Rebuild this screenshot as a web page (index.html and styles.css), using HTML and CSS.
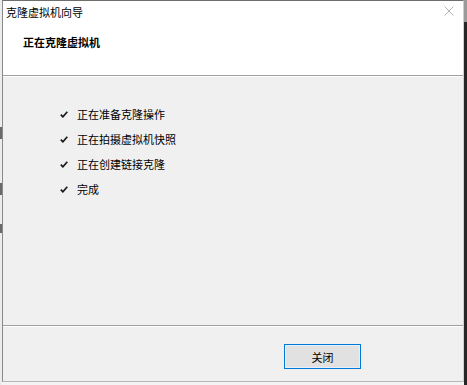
FILE: index.html
```html
<!DOCTYPE html>
<html lang="zh-CN">
<head>
<meta charset="utf-8">
<title>克隆虚拟机向导</title>
<link rel="stylesheet" href="styles.css">
</head>
<body>
<div class="screen">
  <div class="bg-left">
    <span class="mark m1"></span>
    <span class="mark m2"></span>
    <span class="mark m3"></span>
  </div>
  <div class="window">
    <div class="titlebar">
      <span class="title">克隆虚拟机向导</span>
      <svg class="close" width="10" height="10" viewBox="0 0 10 10"><path d="M0.5 0.5 L9.5 9.5 M9.5 0.5 L0.5 9.5" stroke="#b4b4b4" stroke-width="1" fill="none"/></svg>
    </div>
    <div class="header">
      <div class="heading">正在克隆虚拟机</div>
    </div>
    <div class="sep"></div>
    <div class="content">
      <ul class="steps">
        <li class="step"><svg class="check" width="8" height="7" viewBox="0 0 8 7"><path d="M0.8 3.6 L2.9 5.8 L7.3 0.8" stroke="#1a1a1a" stroke-width="1.7" fill="none"/></svg><span>正在准备克隆操作</span></li>
        <li class="step"><svg class="check" width="8" height="7" viewBox="0 0 8 7"><path d="M0.8 3.6 L2.9 5.8 L7.3 0.8" stroke="#1a1a1a" stroke-width="1.7" fill="none"/></svg><span>正在拍摄虚拟机快照</span></li>
        <li class="step"><svg class="check" width="8" height="7" viewBox="0 0 8 7"><path d="M0.8 3.6 L2.9 5.8 L7.3 0.8" stroke="#1a1a1a" stroke-width="1.7" fill="none"/></svg><span>正在创建链接克隆</span></li>
        <li class="step"><svg class="check" width="8" height="7" viewBox="0 0 8 7"><path d="M0.8 3.6 L2.9 5.8 L7.3 0.8" stroke="#1a1a1a" stroke-width="1.7" fill="none"/></svg><span>完成</span></li>
      </ul>
    </div>
    <div class="sep"></div>
    <div class="footer">
      <button class="btn" type="button">关闭</button>
    </div>
  </div>
  <div class="bg-right"></div>
</div>
</body>
</html>
```
FILE: styles.css
```css
html, body {
  margin: 0;
  padding: 0;
}
body {
  width: 467px;
  height: 385px;
  overflow: hidden;
  background: #f4f4f4;
  font-family: "Noto Sans CJK SC", "Microsoft YaHei", sans-serif;
  font-size: 11px;
  color: #000;
}
.screen {
  display: flex;
  align-items: flex-start;
  width: 467px;
  height: 385px;
}
.bg-left {
  width: 2px;
  height: 385px;
  background: #ececec;
  display: flex;
  flex-direction: column;
}
.mark {
  display: block;
  width: 2px;
  background: #6a6a6a;
}
.m1 { margin-top: 127px; height: 12px; }
.m2 { margin-top: 44px; height: 12px; }
.m3 { margin-top: 29px; height: 9px; }
.bg-right {
  width: 3px;
  height: 385px;
  background: linear-gradient(#9a9a9a 0, #9a9a9a 22px, #262626 22px, #262626 100%);
}
.window {
  width: 462px;
  height: 382px;
  box-sizing: border-box;
  border-top: 1px solid #6e6e6e;
  border-left: 1px solid #8a8a8a;
  border-right: 1px solid #cfcfcf;
  border-bottom: 1px solid #b8b8b8;
  display: flex;
  flex-direction: column;
  background: #f0f0f0;
}
.titlebar {
  height: 22px;
  background: #fff;
  display: flex;
  align-items: center;
  justify-content: space-between;
  padding: 0 9px 0 3px;
}
.title {
  font-size: 11px;
  line-height: 22px;
  color: #000;
}
.close {
  display: block;
  margin-top: -2px;
}
.header {
  height: 52px;
  background: #fff;
  box-sizing: border-box;
  padding: 12px 0 0 20px;
}
.heading {
  font-weight: bold;
  font-size: 11px;
  line-height: 14px;
}
.sep {
  height: 1px;
  background: #a0a0a0;
  border-bottom: 1px solid #ffffff;
}
.content {
  height: 248px;
  box-sizing: border-box;
  padding-top: 25px;
}
.steps {
  list-style: none;
  margin: 0;
  padding: 0 0 0 57px;
}
.step {
  display: flex;
  align-items: center;
  height: 25px;
  line-height: 25px;
}
.check {
  display: block;
  margin-right: 9px;
}
.footer {
  height: 54px;
  box-sizing: border-box;
  padding: 17px 0 0 281px;
}
.btn {
  width: 77px;
  height: 25px;
  box-sizing: border-box;
  border: 1px solid #0078d7;
  background: #e1e1e1;
  box-shadow: inset 0 0 0 1px #e6f0fa;
  font-family: "Noto Sans CJK SC", "Microsoft YaHei", sans-serif;
  font-size: 11px;
  color: #000;
  padding: 0;
  margin: 0;
}
```
